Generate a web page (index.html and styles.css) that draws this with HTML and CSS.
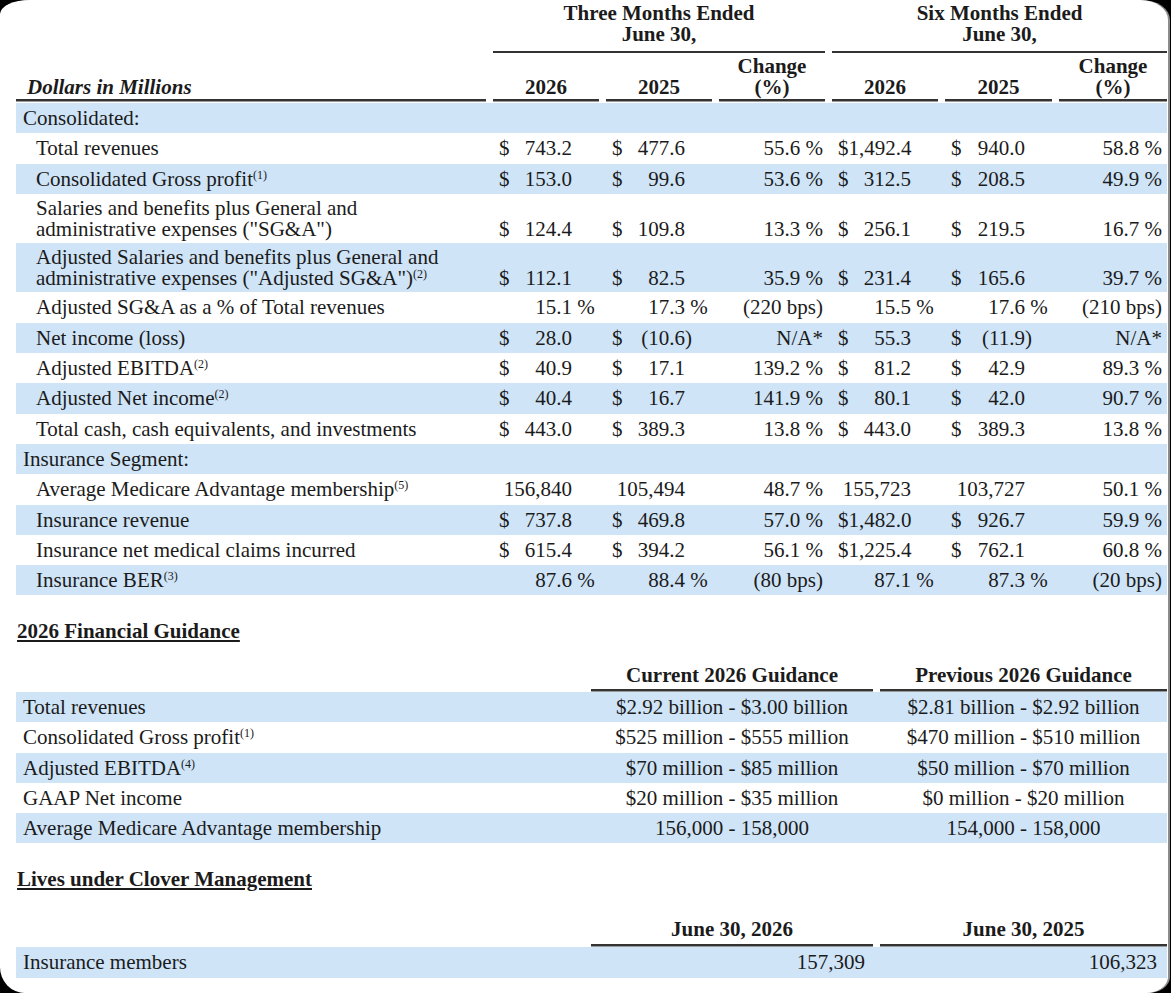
FILE: index.html
```html
<!DOCTYPE html>
<html lang="en">
<head>
    <meta charset="UTF-8">
    <meta name="viewport" content="width=device-width, initial-scale=1.0">
    <title>Quarterly Highlights</title>
    <link rel="stylesheet" href="styles.css">
</head>
<body>
    <div class="sheet">
        <!-- Key metrics table -->
        <table class="fin">
            <colgroup>
                <col class="w-label">
                <col class="w-num"><col class="w-num"><col class="w-num">
                <col class="w-num"><col class="w-num5"><col class="w-num6">
            </colgroup>
            <thead>
                <tr class="period">
                    <th class="blank"></th>
                    <th colspan="3"><div class="rule">Three Months Ended<br>June 30,</div></th>
                    <th colspan="3" class="last"><div class="rule">Six Months Ended<br>June 30,</div></th>
                </tr>
                <tr class="cols">
                    <th class="lead"><div class="rule">Dollars in Millions</div></th>
                    <th><div class="rule">2026</div></th>
                    <th><div class="rule">2025</div></th>
                    <th><div class="rule">Change<br>(%)</div></th>
                    <th><div class="rule">2026</div></th>
                    <th><div class="rule">2025</div></th>
                    <th class="last"><div class="rule">Change<br>(%)</div></th>
                </tr>
            </thead>
            <tbody>
                <tr class="shade">
                    <td class="section" colspan="7">Consolidated:</td>
                </tr>
                <tr>
                    <td class="label">Total revenues</td>
                    <td class="m"><span class="cur">$</span>743.2</td>
                    <td class="m"><span class="cur">$</span>477.6</td>
                    <td class="p">55.6 %</td>
                    <td class="m"><span class="cur">$</span>1,492.4</td>
                    <td class="m"><span class="cur">$</span>940.0</td>
                    <td class="p">58.8 %</td>
                </tr>
                <tr class="shade">
                    <td class="label">Consolidated Gross profit<sup>(1)</sup></td>
                    <td class="m"><span class="cur">$</span>153.0</td>
                    <td class="m"><span class="cur">$</span>99.6</td>
                    <td class="p">53.6 %</td>
                    <td class="m"><span class="cur">$</span>312.5</td>
                    <td class="m"><span class="cur">$</span>208.5</td>
                    <td class="p">49.9 %</td>
                </tr>
                <tr class="double">
                    <td class="label">Salaries and benefits plus General and<br>administrative expenses ("SG&amp;A")</td>
                    <td class="m"><span class="cur">$</span>124.4</td>
                    <td class="m"><span class="cur">$</span>109.8</td>
                    <td class="p">13.3 %</td>
                    <td class="m"><span class="cur">$</span>256.1</td>
                    <td class="m"><span class="cur">$</span>219.5</td>
                    <td class="p">16.7 %</td>
                </tr>
                <tr class="shade double">
                    <td class="label">Adjusted Salaries and benefits plus General and<br>administrative expenses ("Adjusted SG&amp;A")<sup>(2)</sup></td>
                    <td class="m"><span class="cur">$</span>112.1</td>
                    <td class="m"><span class="cur">$</span>82.5</td>
                    <td class="p">35.9 %</td>
                    <td class="m"><span class="cur">$</span>231.4</td>
                    <td class="m"><span class="cur">$</span>165.6</td>
                    <td class="p">39.7 %</td>
                </tr>
                <tr>
                    <td class="label">Adjusted SG&amp;A as a % of Total revenues</td>
                    <td class="m">15.1<span class="sfx">&nbsp;%</span></td>
                    <td class="m">17.3<span class="sfx">&nbsp;%</span></td>
                    <td class="p">(220 bps)</td>
                    <td class="m">15.5<span class="sfx">&nbsp;%</span></td>
                    <td class="m">17.6<span class="sfx">&nbsp;%</span></td>
                    <td class="p">(210 bps)</td>
                </tr>
                <tr class="shade">
                    <td class="label">Net income (loss)</td>
                    <td class="m"><span class="cur">$</span>28.0</td>
                    <td class="m"><span class="cur">$</span>(10.6<span class="sfx">)</span></td>
                    <td class="p">N/A*</td>
                    <td class="m"><span class="cur">$</span>55.3</td>
                    <td class="m"><span class="cur">$</span>(11.9<span class="sfx">)</span></td>
                    <td class="p">N/A*</td>
                </tr>
                <tr>
                    <td class="label">Adjusted EBITDA<sup>(2)</sup></td>
                    <td class="m"><span class="cur">$</span>40.9</td>
                    <td class="m"><span class="cur">$</span>17.1</td>
                    <td class="p">139.2 %</td>
                    <td class="m"><span class="cur">$</span>81.2</td>
                    <td class="m"><span class="cur">$</span>42.9</td>
                    <td class="p">89.3 %</td>
                </tr>
                <tr class="shade">
                    <td class="label">Adjusted Net income<sup>(2)</sup></td>
                    <td class="m"><span class="cur">$</span>40.4</td>
                    <td class="m"><span class="cur">$</span>16.7</td>
                    <td class="p">141.9 %</td>
                    <td class="m"><span class="cur">$</span>80.1</td>
                    <td class="m"><span class="cur">$</span>42.0</td>
                    <td class="p">90.7 %</td>
                </tr>
                <tr>
                    <td class="label">Total cash, cash equivalents, and investments</td>
                    <td class="m"><span class="cur">$</span>443.0</td>
                    <td class="m"><span class="cur">$</span>389.3</td>
                    <td class="p">13.8 %</td>
                    <td class="m"><span class="cur">$</span>443.0</td>
                    <td class="m"><span class="cur">$</span>389.3</td>
                    <td class="p">13.8 %</td>
                </tr>
                <tr class="shade">
                    <td class="section" colspan="7">Insurance Segment:</td>
                </tr>
                <tr>
                    <td class="label">Average Medicare Advantage membership<sup>(5)</sup></td>
                    <td class="m">156,840</td>
                    <td class="m">105,494</td>
                    <td class="p">48.7 %</td>
                    <td class="m">155,723</td>
                    <td class="m">103,727</td>
                    <td class="p">50.1 %</td>
                </tr>
                <tr class="shade">
                    <td class="label">Insurance revenue</td>
                    <td class="m"><span class="cur">$</span>737.8</td>
                    <td class="m"><span class="cur">$</span>469.8</td>
                    <td class="p">57.0 %</td>
                    <td class="m"><span class="cur">$</span>1,482.0</td>
                    <td class="m"><span class="cur">$</span>926.7</td>
                    <td class="p">59.9 %</td>
                </tr>
                <tr>
                    <td class="label">Insurance net medical claims incurred</td>
                    <td class="m"><span class="cur">$</span>615.4</td>
                    <td class="m"><span class="cur">$</span>394.2</td>
                    <td class="p">56.1 %</td>
                    <td class="m"><span class="cur">$</span>1,225.4</td>
                    <td class="m"><span class="cur">$</span>762.1</td>
                    <td class="p">60.8 %</td>
                </tr>
                <tr class="shade">
                    <td class="label">Insurance BER<sup>(3)</sup></td>
                    <td class="m">87.6<span class="sfx">&nbsp;%</span></td>
                    <td class="m">88.4<span class="sfx">&nbsp;%</span></td>
                    <td class="p">(80 bps)</td>
                    <td class="m">87.1<span class="sfx">&nbsp;%</span></td>
                    <td class="m">87.3<span class="sfx">&nbsp;%</span></td>
                    <td class="p">(20 bps)</td>
                </tr>
            </tbody>
        </table>

        <!-- Guidance -->
        <div class="heading">2026 Financial Guidance</div>
        <table class="side guidance">
            <colgroup>
                <col class="w-side"><col class="w-mid"><col class="w-end">
            </colgroup>
            <thead>
                <tr>
                    <th class="blank"></th>
                    <th><div class="rule">Current 2026 Guidance</div></th>
                    <th class="last"><div class="rule">Previous 2026 Guidance</div></th>
                </tr>
            </thead>
            <tbody>
                <tr class="shade">
                    <td class="item">Total revenues</td>
                    <td class="c">$2.92 billion - $3.00 billion</td>
                    <td class="c last">$2.81 billion - $2.92 billion</td>
                </tr>
                <tr>
                    <td class="item">Consolidated Gross profit<sup>(1)</sup></td>
                    <td class="c">$525 million - $555 million</td>
                    <td class="c last">$470 million - $510 million</td>
                </tr>
                <tr class="shade">
                    <td class="item">Adjusted EBITDA<sup>(4)</sup></td>
                    <td class="c">$70 million - $85 million</td>
                    <td class="c last">$50 million - $70 million</td>
                </tr>
                <tr>
                    <td class="item">GAAP Net income</td>
                    <td class="c">$20 million - $35 million</td>
                    <td class="c last">$0 million - $20 million</td>
                </tr>
                <tr class="shade">
                    <td class="item">Average Medicare Advantage membership</td>
                    <td class="c">156,000 - 158,000</td>
                    <td class="c last">154,000 - 158,000</td>
                </tr>
            </tbody>
        </table>

        <!-- Lives under management -->
        <div class="heading">Lives under Clover Management</div>
        <table class="side lives">
            <colgroup>
                <col class="w-side"><col class="w-mid"><col class="w-end">
            </colgroup>
            <thead>
                <tr>
                    <th class="blank"></th>
                    <th><div class="rule">June 30, 2026</div></th>
                    <th class="last"><div class="rule">June 30, 2025</div></th>
                </tr>
            </thead>
            <tbody>
                <tr class="shade">
                    <td class="item">Insurance members</td>
                    <td class="r">157,309</td>
                    <td class="r">106,323</td>
                </tr>
            </tbody>
        </table>
    </div>
</body>
</html>
```

FILE: styles.css
```css
body {
    margin: 0;
    background-color: #000;
    overflow: hidden;
    font-family: "Liberation Serif", "Times New Roman", serif;
    font-size: 21px;
    color: #1b1b1b;
}
.sheet {
    width: 1168px;
    height: 993px;
    box-sizing: border-box;
    padding: 0 1px 0 16px;
    background-color: #fff;
    border-radius: 30px 28px 22px 25px / 14px 20px 16px 26px;
    box-shadow: 2px 0 0 #8c8c8c;
    overflow: hidden;
}
table {
    border-collapse: collapse;
    border-spacing: 0;
    table-layout: fixed;
    width: 1151px;
}
.w-label { width: 473px; }
.w-num { width: 113px; }
.w-num5 { width: 114px; }
.w-num6 { width: 112px; }
.w-side { width: 571px; }
.w-mid { width: 289px; }
.w-end { width: 291px; }

/* Column headings */
th {
    font-weight: bold;
    text-align: center;
    vertical-align: bottom;
    line-height: 21px;
    padding: 0 3px 0 4px;
}
th.last {
    padding-right: 0;
}
th.blank {
    padding: 0;
}
.rule {
    border-bottom: 2px solid #333;
}
.period .rule {
    padding: 3px 0 6px;
}
.cols th {
    padding-bottom: 2px;
}
.cols .rule {
    padding: 3px 0 1px;
    box-shadow: 0 1px 0 #9a9a9a;
}
.cols th.lead {
    text-align: left;
    font-style: italic;
    padding-left: 0;
}
.cols th.lead .rule {
    padding-left: 11px;
}

/* Body rows */
td {
    padding: 5px 0 4.3px;
    line-height: 21px;
    vertical-align: bottom;
    white-space: nowrap;
}
tr.double td {
    padding-top: 4px;
    padding-bottom: 3.3px;
}
tr.shade {
    background-color: #cfe4f7;
}
td.section {
    padding-left: 7px;
}
td.label {
    padding-left: 20px;
}
td.m {
    text-align: right;
    padding-left: 10px;
    padding-right: 30px;
}
td.m .cur {
    float: left;
}
.sfx {
    display: inline-block;
    width: 30px;
    margin-right: -30px;
    text-align: left;
}
td.p {
    text-align: right;
    padding-right: 5px;
}
sup {
    font-size: 12px;
    line-height: 0;
    vertical-align: 7px;
}

/* Section headings */
.heading {
    font-weight: bold;
    line-height: 24px;
    padding-left: 1px;
    text-decoration: underline;
    text-decoration-thickness: 2px;
    text-underline-offset: 2px;
    margin-top: 23.5px;
}
.side th {
    padding-bottom: 1px;
}
.side th.blank {
    padding: 0;
}
.side .rule {
    padding-bottom: 3px;
    box-shadow: 0 1px 0 #9a9a9a;
}
.guidance {
    margin-top: 22px;
}
.lives {
    margin-top: 28.4px;
}
.lives .rule {
    padding-bottom: 4px;
}
td.item {
    padding-left: 7px;
}
td.c {
    text-align: center;
    padding-left: 4px;
    padding-right: 3px;
}
td.c.last {
    padding-right: 0;
}
td.r {
    text-align: right;
    padding-right: 11px;
}
.lives td.r:last-child {
    padding-right: 10px;
}
```
